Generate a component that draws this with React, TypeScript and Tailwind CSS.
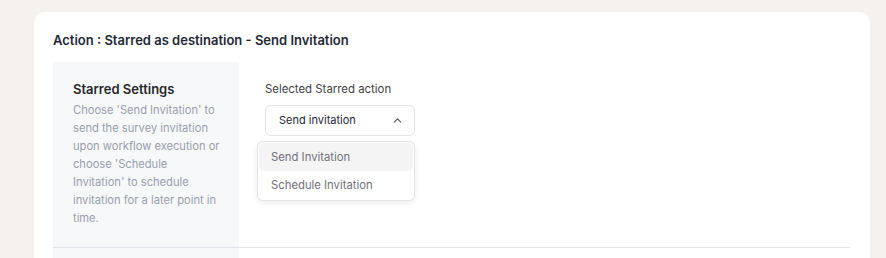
import { ChevronUp } from "lucide-react";

export default function App() {
  return (
    <div
      className="h-[258px] w-[886px] overflow-hidden bg-[#f5f2ed] pl-[34px] pt-[12px]"
      style={{ fontFamily: "Inter, 'Noto Sans', sans-serif" }}
    >
      <div className="h-[300px] w-[836px] rounded-[10px] bg-white pl-[19px] pr-[20px]">
        <h1 className="pt-[20px] pb-[14px] text-[13px] font-semibold leading-[16px] text-[#1f2937]">
          Action : Starred as destination - Send Invitation
        </h1>

        <div className="flex border-b border-[#e3e3ec]">
          <div className="w-[186px] shrink-0 bg-[#f7f8fa] pl-[20px] pr-[18px] pt-[18px] pb-[20px]">
            <h2 className="text-[13px] font-semibold leading-[18px] text-[#27272a]">
              Starred Settings
            </h2>
            <p className="mt-[3px] text-[11.15px] leading-[18px] text-[#98a0ad]">
              Choose 'Send Invitation' to send the survey invitation upon workflow execution or
              choose 'Schedule Invitation' to schedule invitation for a later point in time.
            </p>
          </div>

          <div className="pl-[26px] pt-[18px]">
            <label className="block text-[11.4px] leading-[18px] text-[#3f3f46]">
              Selected Starred action
            </label>
            <div className="relative mt-[7px] w-[150px]">
              <button className="flex h-[31px] w-full items-center justify-between rounded-[6px] border border-[#e4e4e7] bg-white pl-[13px] pr-[10px] text-[11px] text-[#1f2937]">
                <span>Send invitation</span>
                <ChevronUp className="h-[13px] w-[13px] text-[#52525b]" strokeWidth={2} />
              </button>
              <ul className="absolute left-[-8px] top-[36px] w-[158px] rounded-[6px] border border-[#e4e4e7] bg-white p-px text-[11.3px] text-[#71717a] shadow-[0_2px_6px_rgba(0,0,0,0.08)]">
                <li className="flex h-[28px] items-center rounded-[5px] bg-[#f4f4f5] pl-[12px]">
                  Send Invitation
                </li>
                <li className="flex h-[28px] items-center pl-[12px]">Schedule Invitation</li>
              </ul>
            </div>
          </div>
        </div>

        <div className="h-[40px] w-[186px] bg-[#f7f8fa]" />
      </div>
    </div>
  );
}
